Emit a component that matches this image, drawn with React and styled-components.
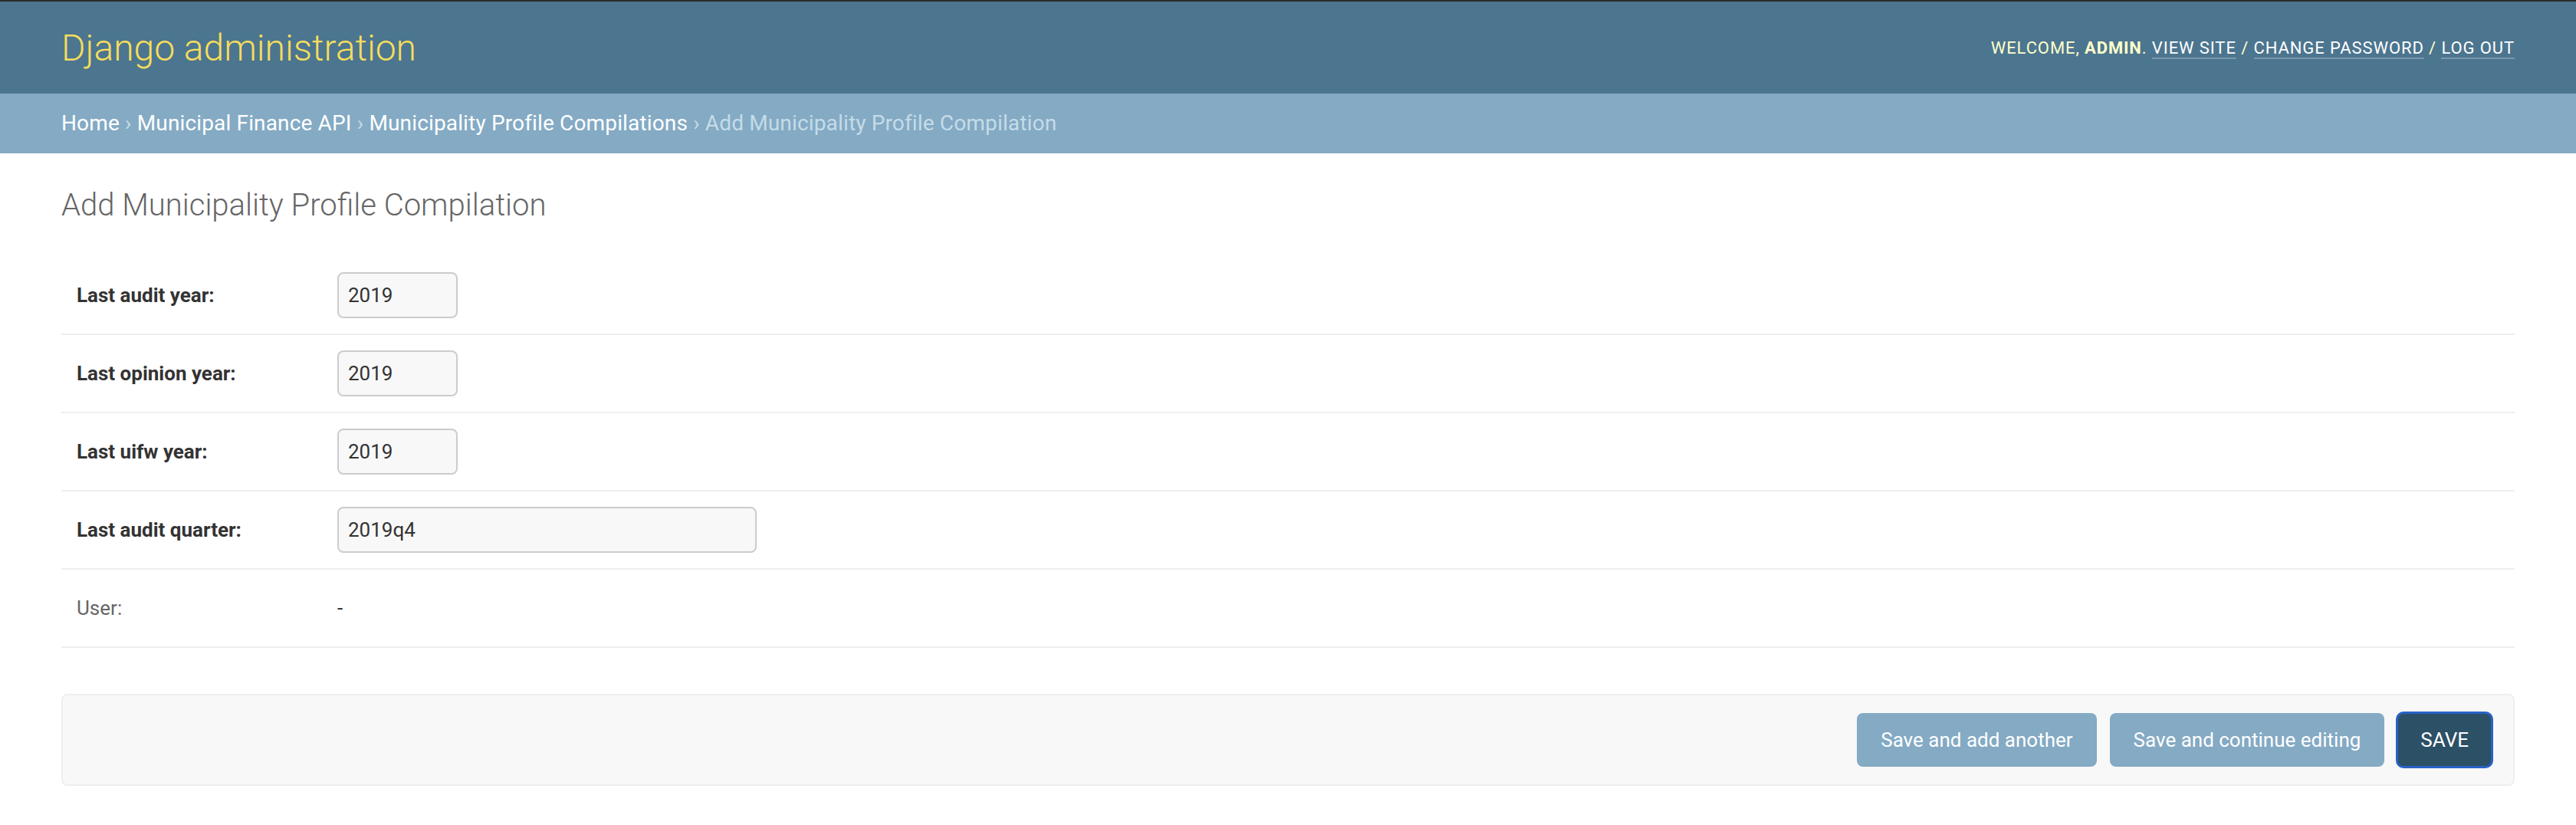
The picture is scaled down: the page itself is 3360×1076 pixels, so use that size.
import styled, { createGlobalStyle } from "styled-components";

const GlobalStyle = createGlobalStyle`
  html, body {
    margin: 0;
    padding: 0;
    background: #fff;
  }
  body {
    font-family: Roboto, "Liberation Sans", Arial, sans-serif;
    color: #333;
  }
`;

const Header = styled.header`
  display: flex;
  justify-content: space-between;
  align-items: center;
  height: 120px;
  padding: 0 80px;
  background: #4c758f;
  border-top: 2px solid #2b2b2b;
`;

const Branding = styled.h1`
  margin: 0;
  font-size: 48px;
  font-weight: 300;
  color: #f5dd5d;
`;

const UserTools = styled.div`
  font-size: 22px;
  letter-spacing: 0.9px;
  text-transform: uppercase;
  color: #ffc;

  strong {
    font-weight: 700;
  }
`;

const ToolLink = styled.a`
  color: #fff;
  text-decoration: none;
  border-bottom: 2px solid rgba(255, 255, 255, 0.25);
`;

const Breadcrumbs = styled.nav`
  padding: 20px 80px;
  line-height: 38px;
  font-size: 28px;
  letter-spacing: 0.15px;
  background: #84aac4;
  color: #c4dce8;
`;

const Crumb = styled.a`
  color: #fff;
  text-decoration: none;
`;

const Content = styled.main`
  padding: 44px 80px 40px;
`;

const Title = styled.h1`
  margin: 0 0 44px;
  font-size: 40px;
  line-height: 47px;
  font-weight: 300;
  color: #666;
`;

const Row = styled.div`
  display: flex;
  align-items: center;
  height: 60px;
  padding: 20px;
  border-bottom: 2px solid #eee;
`;

const Label = styled.label`
  width: 340px;
  flex-shrink: 0;
  font-size: 26px;
  font-weight: ${(p) => (p.$required ? 700 : 400)};
  color: ${(p) => (p.$required ? "#333" : "#666")};
`;

const Input = styled.input`
  box-sizing: border-box;
  width: ${(p) => p.$width}px;
  height: 60px;
  padding: 0 12px;
  border: 2px solid #ccc;
  border-radius: 8px;
  background: #f8f8f8;
  font-family: inherit;
  font-size: 26px;
  color: #333;
  outline: none;
`;

const Readonly = styled.div`
  font-size: 26px;
  color: #333;
`;

const SubmitRow = styled.div`
  display: flex;
  justify-content: flex-end;
  align-items: center;
  gap: 17px;
  margin-top: 60px;
  padding: 23px 28px;
  background: #f8f8f8;
  border: 2px solid #eee;
  border-radius: 8px;
`;

const Button = styled.button`
  height: 70px;
  padding: 0 ${(p) => (p.$primary ? 30 : 31)}px;
  border: none;
  border-radius: 8px;
  font-family: inherit;
  font-size: 26px;
  color: #fff;
  cursor: pointer;
  background: ${(p) => (p.$primary ? "#2c5066" : "#84aac4")};
  text-transform: ${(p) => (p.$primary ? "uppercase" : "none")};
  outline: ${(p) => (p.$primary ? "3px solid #2862c7" : "none")};
  outline-offset: -1px;
`;

const fields = [
  { label: "Last audit year:", value: "2019", width: 157 },
  { label: "Last opinion year:", value: "2019", width: 157 },
  { label: "Last uifw year:", value: "2019", width: 157 },
  { label: "Last audit quarter:", value: "2019q4", width: 547 },
];

export default function App() {
  return (
    <>
      <GlobalStyle />
      <Header>
        <Branding>Django administration</Branding>
        <UserTools>
          Welcome, <strong>admin</strong>. <ToolLink href="#">View site</ToolLink> /{" "}
          <ToolLink href="#">Change password</ToolLink> / <ToolLink href="#">Log out</ToolLink>
        </UserTools>
      </Header>
      <Breadcrumbs>
        <Crumb href="#">Home</Crumb> › <Crumb href="#">Municipal Finance API</Crumb> ›{" "}
        <Crumb href="#">Municipality Profile Compilations</Crumb> › Add Municipality Profile Compilation
      </Breadcrumbs>
      <Content>
        <Title>Add Municipality Profile Compilation</Title>
        {fields.map((f) => (
          <Row key={f.label}>
            <Label $required>{f.label}</Label>
            <Input $width={f.width} defaultValue={f.value} />
          </Row>
        ))}
        <Row>
          <Label>User:</Label>
          <Readonly>-</Readonly>
        </Row>
        <SubmitRow>
          <Button>Save and add another</Button>
          <Button>Save and continue editing</Button>
          <Button $primary>Save</Button>
        </SubmitRow>
      </Content>
    </>
  );
}
